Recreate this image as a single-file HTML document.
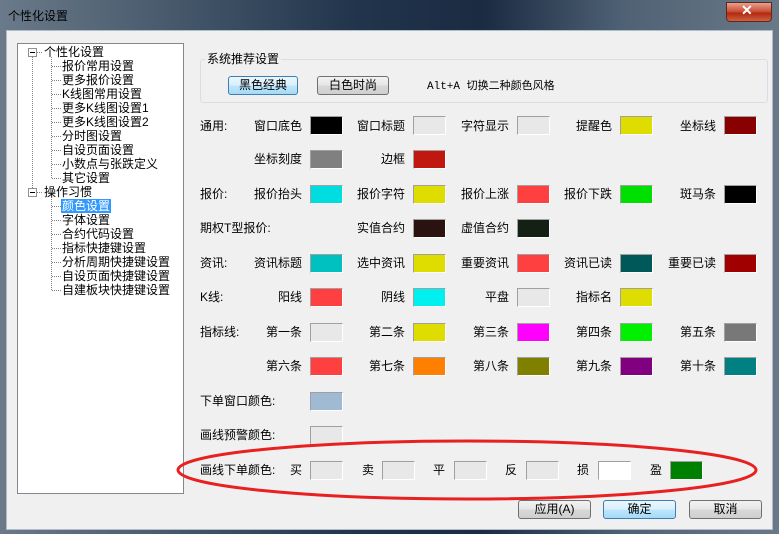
<!DOCTYPE html>
<html><head><meta charset="utf-8"><style>
*{margin:0;padding:0;box-sizing:border-box}
body{width:779px;height:534px;overflow:hidden;background:#1d2d40;font-family:"Liberation Sans","Noto Sans CJK SC",sans-serif;font-size:12px;color:#000;position:relative}
.a{position:absolute;white-space:nowrap;line-height:14px}
#title{position:absolute;left:0;top:0;width:779px;height:534px;background:linear-gradient(90deg,#6a7a8a 0%,#4a5c6e 20%,#22354c 45%,#1a2b42 62%,#4f6174 80%,#6a7988 100%)}
#content{position:absolute;left:6px;top:30px;width:767px;height:500px;background:#f0f0f0;border:1px solid #b0bcc8}
.sw{position:absolute;width:33px;height:19px;border-top:1px solid #a0a0a0;border-left:1px solid #a0a0a0;border-right:1px solid #fff;border-bottom:1px solid #fff}
.btn{position:absolute;height:19px;border:1px solid #707070;border-radius:3px;background:linear-gradient(#f2f2f2,#e6e6e6 50%,#d8d8d8 51%,#cfcfcf);text-align:center;line-height:17px}
.tree{position:absolute;left:17px;top:43px;width:167px;height:451px;background:#fff;border:1px solid #828790}
.r{text-align:right}
</style></head><body>
<div id="title"></div>
<div class="a" style="left:8px;top:9px;font-size:12px;color:#000">个性化设置</div>
<div style="position:absolute;left:726px;top:2px;width:46px;height:20px;border:1px solid #5a2a20;border-radius:0 0 4px 4px;background:linear-gradient(#e8a090,#c84a30 50%,#b02810 55%,#d06040)"></div>
<div class="a" style="left:741px;top:3px;color:#fff;font-weight:bold;font-size:14px">✕</div>
<div id="content"></div>

<div class="tree"></div>
<svg style="position:absolute;left:17px;top:43px" width="167" height="451">
<g stroke="#808080" stroke-dasharray="1,1" fill="none">
<line x1="15.5" y1="14" x2="15.5" y2="146"/>
<line x1="20" y1="9.5" x2="26" y2="9.5"/>
<line x1="20" y1="149.5" x2="26" y2="149.5"/>
<line x1="34.5" y1="14" x2="34.5" y2="136"/>
<line x1="34.5" y1="154" x2="34.5" y2="248"/>
</g>
<g stroke="#808080" stroke-dasharray="1,1">
<line x1="35" y1="23.5" x2="44" y2="23.5"/><line x1="35" y1="37.5" x2="44" y2="37.5"/><line x1="35" y1="51.5" x2="44" y2="51.5"/><line x1="35" y1="65.5" x2="44" y2="65.5"/><line x1="35" y1="79.5" x2="44" y2="79.5"/><line x1="35" y1="93.5" x2="44" y2="93.5"/><line x1="35" y1="107.5" x2="44" y2="107.5"/><line x1="35" y1="121.5" x2="44" y2="121.5"/><line x1="35" y1="135.5" x2="44" y2="135.5"/>
<line x1="35" y1="163.5" x2="44" y2="163.5"/><line x1="35" y1="177.5" x2="44" y2="177.5"/><line x1="35" y1="191.5" x2="44" y2="191.5"/><line x1="35" y1="205.5" x2="44" y2="205.5"/><line x1="35" y1="219.5" x2="44" y2="219.5"/><line x1="35" y1="233.5" x2="44" y2="233.5"/><line x1="35" y1="247.5" x2="44" y2="247.5"/>
</g>
<rect x="11.5" y="5.5" width="8" height="8" fill="#fff" stroke="#919191"/><line x1="13" y1="9.5" x2="18" y2="9.5" stroke="#000"/>
<rect x="11.5" y="145.5" width="8" height="8" fill="#fff" stroke="#919191"/><line x1="13" y1="149.5" x2="18" y2="149.5" stroke="#000"/>
</svg>
<div class="a" style="left:44px;top:45px">个性化设置</div>
<div class="a" style="left:62px;top:59px">报价常用设置</div>
<div class="a" style="left:62px;top:73px">更多报价设置</div>
<div class="a" style="left:62px;top:87px">K线图常用设置</div>
<div class="a" style="left:62px;top:101px">更多K线图设置1</div>
<div class="a" style="left:62px;top:115px">更多K线图设置2</div>
<div class="a" style="left:62px;top:129px">分时图设置</div>
<div class="a" style="left:62px;top:143px">自设页面设置</div>
<div class="a" style="left:62px;top:157px">小数点与张跌定义</div>
<div class="a" style="left:62px;top:171px">其它设置</div>
<div class="a" style="left:44px;top:185px">操作习惯</div>
<div class="a" style="left:61px;top:199px;background:#3399ff;color:#fff;padding:0 1px">颜色设置</div>
<div class="a" style="left:62px;top:213px">字体设置</div>
<div class="a" style="left:62px;top:227px">合约代码设置</div>
<div class="a" style="left:62px;top:241px">指标快捷键设置</div>
<div class="a" style="left:62px;top:255px">分析周期快捷键设置</div>
<div class="a" style="left:62px;top:269px">自设页面快捷键设置</div>
<div class="a" style="left:62px;top:283px">自建板块快捷键设置</div>

<div style="position:absolute;left:200px;top:59px;width:568px;height:44px;border:1px solid #d5dfe5;border-radius:3px"></div>
<div class="a" style="left:205px;top:52px;background:#f0f0f0;padding:0 2px">系统推荐设置</div>
<div class="btn" style="left:228px;top:76px;width:70px;border-color:#3c7fb1;background:linear-gradient(#eaf6fd,#d9f0fc 50%,#bee6fd 51%,#a7d9f5)">黑色经典</div>
<div class="btn" style="left:317px;top:76px;width:72px">白色时尚</div>
<div class="a" style="left:427px;top:80px;font-family:'Liberation Mono','Noto Sans CJK SC',monospace;font-size:11px">Alt+A 切换二种颜色风格</div>

<div class="a" style="left:200px;top:119px">通用:</div>
<div class="a" style="left:200px;top:187px">报价:</div>
<div class="a" style="left:200px;top:221px">期权T型报价:</div>
<div class="a" style="left:200px;top:256px">资讯:</div>
<div class="a" style="left:200px;top:290px">K线:</div>
<div class="a" style="left:200px;top:325px">指标线:</div>
<div class="a" style="left:200px;top:394px">下单窗口颜色:</div>
<div class="a" style="left:200px;top:428px">画线预警颜色:</div>
<div class="a" style="left:200px;top:463px">画线下单颜色:</div>

<div class="a r" style="left:202px;width:100px;top:119px">窗口底色</div><div class="sw" style="left:310px;top:116px;background:#000"></div>
<div class="a r" style="left:305px;width:100px;top:119px">窗口标题</div><div class="sw" style="left:413px;top:116px;background:#e8e8e8"></div>
<div class="a r" style="left:409px;width:100px;top:119px">字符显示</div><div class="sw" style="left:517px;top:116px;background:#e8e8e8"></div>
<div class="a r" style="left:512px;width:100px;top:119px">提醒色</div><div class="sw" style="left:620px;top:116px;background:#dfdc00"></div>
<div class="a r" style="left:616px;width:100px;top:119px">坐标线</div><div class="sw" style="left:724px;top:116px;background:#880000"></div>

<div class="a r" style="left:202px;width:100px;top:152px">坐标刻度</div><div class="sw" style="left:310px;top:150px;background:#808080"></div>
<div class="a r" style="left:305px;width:100px;top:152px">边框</div><div class="sw" style="left:413px;top:150px;background:#c01810"></div>

<div class="a r" style="left:202px;width:100px;top:187px">报价抬头</div><div class="sw" style="left:310px;top:185px;background:#00dde0"></div>
<div class="a r" style="left:305px;width:100px;top:187px">报价字符</div><div class="sw" style="left:413px;top:185px;background:#dfdc00"></div>
<div class="a r" style="left:409px;width:100px;top:187px">报价上涨</div><div class="sw" style="left:517px;top:185px;background:#ff4040"></div>
<div class="a r" style="left:512px;width:100px;top:187px">报价下跌</div><div class="sw" style="left:620px;top:185px;background:#00e000"></div>
<div class="a r" style="left:616px;width:100px;top:187px">斑马条</div><div class="sw" style="left:724px;top:185px;background:#000"></div>

<div class="a r" style="left:305px;width:100px;top:221px">实值合约</div><div class="sw" style="left:413px;top:219px;background:#2a1210"></div>
<div class="a r" style="left:409px;width:100px;top:221px">虚值合约</div><div class="sw" style="left:517px;top:219px;background:#142014"></div>

<div class="a r" style="left:202px;width:100px;top:256px">资讯标题</div><div class="sw" style="left:310px;top:254px;background:#00c0c0"></div>
<div class="a r" style="left:305px;width:100px;top:256px">选中资讯</div><div class="sw" style="left:413px;top:254px;background:#dfdc00"></div>
<div class="a r" style="left:409px;width:100px;top:256px">重要资讯</div><div class="sw" style="left:517px;top:254px;background:#ff4040"></div>
<div class="a r" style="left:512px;width:100px;top:256px">资讯已读</div><div class="sw" style="left:620px;top:254px;background:#005858"></div>
<div class="a r" style="left:616px;width:100px;top:256px">重要已读</div><div class="sw" style="left:724px;top:254px;background:#a00000"></div>

<div class="a r" style="left:202px;width:100px;top:290px">阳线</div><div class="sw" style="left:310px;top:288px;background:#ff4040"></div>
<div class="a r" style="left:305px;width:100px;top:290px">阴线</div><div class="sw" style="left:413px;top:288px;background:#00f0f0"></div>
<div class="a r" style="left:409px;width:100px;top:290px">平盘</div><div class="sw" style="left:517px;top:288px;background:#e8e8e8"></div>
<div class="a r" style="left:512px;width:100px;top:290px">指标名</div><div class="sw" style="left:620px;top:288px;background:#dfdc00"></div>

<div class="a r" style="left:202px;width:100px;top:325px">第一条</div><div class="sw" style="left:310px;top:323px;background:#e8e8e8"></div>
<div class="a r" style="left:305px;width:100px;top:325px">第二条</div><div class="sw" style="left:413px;top:323px;background:#dfdc00"></div>
<div class="a r" style="left:409px;width:100px;top:325px">第三条</div><div class="sw" style="left:517px;top:323px;background:#ff00ff"></div>
<div class="a r" style="left:512px;width:100px;top:325px">第四条</div><div class="sw" style="left:620px;top:323px;background:#00f000"></div>
<div class="a r" style="left:616px;width:100px;top:325px">第五条</div><div class="sw" style="left:724px;top:323px;background:#787878"></div>

<div class="a r" style="left:202px;width:100px;top:359px">第六条</div><div class="sw" style="left:310px;top:357px;background:#ff4040"></div>
<div class="a r" style="left:305px;width:100px;top:359px">第七条</div><div class="sw" style="left:413px;top:357px;background:#ff8000"></div>
<div class="a r" style="left:409px;width:100px;top:359px">第八条</div><div class="sw" style="left:517px;top:357px;background:#808000"></div>
<div class="a r" style="left:512px;width:100px;top:359px">第九条</div><div class="sw" style="left:620px;top:357px;background:#800080"></div>
<div class="a r" style="left:616px;width:100px;top:359px">第十条</div><div class="sw" style="left:724px;top:357px;background:#008080"></div>

<div class="sw" style="left:310px;top:392px;background:#a0bad4"></div>
<div class="sw" style="left:310px;top:426px;background:#e8e8e8"></div>

<div class="a" style="left:290px;top:463px">买</div><div class="sw" style="left:310px;top:461px;background:#e8e8e8"></div>
<div class="a" style="left:362px;top:463px">卖</div><div class="sw" style="left:382px;top:461px;background:#e8e8e8"></div>
<div class="a" style="left:433px;top:463px">平</div><div class="sw" style="left:454px;top:461px;background:#e8e8e8"></div>
<div class="a" style="left:505px;top:463px">反</div><div class="sw" style="left:526px;top:461px;background:#e8e8e8"></div>
<div class="a" style="left:577px;top:463px">损</div><div class="sw" style="left:598px;top:461px;background:#fff"></div>
<div class="a" style="left:650px;top:463px">盈</div><div class="sw" style="left:670px;top:461px;background:#008000"></div>

<svg style="position:absolute;left:0;top:0" width="779" height="534"><ellipse cx="467" cy="470" rx="289" ry="29" fill="none" stroke="#e82020" stroke-width="3"/></svg>

<div class="btn" style="left:518px;top:500px;width:73px">应用(A)</div>
<div class="btn" style="left:603px;top:500px;width:73px;border-color:#3c7fb1;background:linear-gradient(#eaf6fd,#d9f0fc 50%,#bee6fd 51%,#a7d9f5)">确定</div>
<div class="btn" style="left:689px;top:500px;width:73px">取消</div>
</body></html>
